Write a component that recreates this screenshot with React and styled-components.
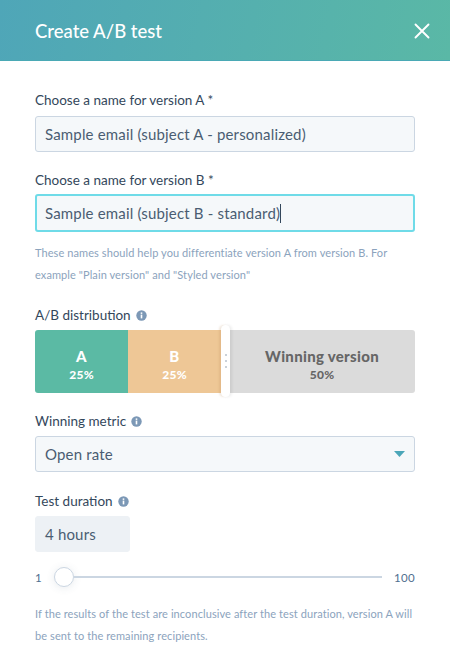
import React from "react";
import styled, { createGlobalStyle } from "styled-components";

const GlobalStyle = createGlobalStyle`
    html, body {
        margin: 0;
        padding: 0;
        background: #fff;
    }
    body {
        font-family: "Lato", "Liberation Sans", sans-serif;
        color: #33475b;
    }
    * {
        box-sizing: border-box;
    }
`;

const Modal = styled.div`
    width: 450px;
    height: 661px;
    overflow: hidden;
    background: #fff;
`;

const Header = styled.header`
    height: 61px;
    padding: 1px 20px 0 35px;
    display: flex;
    align-items: center;
    justify-content: space-between;
    background: linear-gradient(100deg, #4fa6b8 0%, #5ab8a6 100%);
    border-bottom: 1px solid #4aa9b5;
`;

const Title = styled.h1`
    margin: 0;
    font-size: 18.5px;
    font-weight: 500;
    letter-spacing: 0;
    color: #fff;
`;

const Close = styled.button`
    width: 16px;
    height: 16px;
    padding: 0;
    border: 0;
    background: none;
    display: flex;
`;

const Body = styled.div`
    padding: 29px 35px 0;
    display: flex;
    flex-direction: column;
`;

const Label = styled.label`
    height: 20px;
    margin-top: ${p => p.$top || 0}px;
    margin-bottom: ${p => p.$bottom || 6}px;
    display: flex;
    align-items: center;
    gap: 5px;
    font-size: 13.5px;
    line-height: 20px;
    color: #33475b;
`;

const Field = styled.div`
    width: ${p => p.$width || "100%"};
    height: ${p => p.$height || 36}px;
    padding: 0 ${p => (p.$focus ? 8 : 9)}px;
    display: flex;
    align-items: center;
    justify-content: space-between;
    font-size: 15px;
    letter-spacing: 0.17px;
    color: #4a5d72;
    background: #f5f8fa;
    border: ${p => (p.$focus ? "2px solid #6fdbe8" : "1px solid #cbd6e2")};
    border-radius: 3px;
`;

const Value = styled.span`
    display: flex;
    align-items: center;
`;

const Caret = styled.span`
    width: 1px;
    height: 19px;
    background: #33475b;
`;

const Duration = styled(Field)`
    background: #edf1f5;
    border-color: #edf1f5;
`;

const Help = styled.p`
    margin: ${p => p.$top || 0}px 0 0;
    font-size: 11px;
    line-height: 21.6px;
    letter-spacing: 0.09px;
    white-space: nowrap;
    color: #8ba3bd;
`;

const Bar = styled.div`
    position: relative;
    height: 63px;
    display: flex;
`;

const Segment = styled.div`
    width: ${p => p.$width}px;
    padding: 5px 0 0 ${p => p.$inset || 0}px;
    display: flex;
    flex-direction: column;
    align-items: center;
    justify-content: center;
    background: ${p => p.$bg};
    color: ${p => p.$color};
    border-radius: ${p => p.$radius || 0};
`;

const SegmentName = styled.div`
    font-size: 15px;
    line-height: 18px;
    font-weight: 900;
    letter-spacing: 0.3px;
`;

const SegmentShare = styled.div`
    margin-top: 2px;
    font-size: 12px;
    line-height: 15px;
    font-weight: 900;
    letter-spacing: 0.3px;
`;

const Handle = styled.div`
    position: absolute;
    left: 186px;
    top: -5px;
    width: 9px;
    height: 72px;
    display: flex;
    flex-direction: column;
    align-items: center;
    justify-content: center;
    gap: 4px;
    background: #fff;
    border-radius: 5px;
    box-shadow: -2px 0 2px rgba(180, 130, 80, 0.18), 2px 0 3px rgba(0, 0, 0, 0.07);
`;

const HandleDot = styled.span`
    width: 2px;
    height: 2px;
    border-radius: 50%;
    background: #b9c2cc;
`;

const SliderRow = styled.div`
    height: 26px;
    margin-top: 12px;
    display: flex;
    align-items: center;
    font-size: 11.5px;
    letter-spacing: 0.3px;
    color: #516f90;
`;

const SliderMin = styled.span`
    width: 19px;
`;

const Thumb = styled.span`
    width: 20px;
    height: 20px;
    flex-shrink: 0;
    background: #fff;
    border: 1px solid #cbd6e2;
    border-radius: 50%;
    box-shadow: 0 1px 8px rgba(66, 91, 118, 0.12);
`;

const Track = styled.span`
    flex: 1;
    height: 2px;
    background: #cbd6e2;
`;

const SliderMax = styled.span`
    width: 33px;
    text-align: right;
`;

const CloseIcon = () => (
    <svg width="16" height="16" viewBox="0 0 16 16" fill="none" stroke="#fff" strokeWidth="1.9" strokeLinecap="round">
        <path d="M1.5 1.5l13 13M14.5 1.5l-13 13" />
    </svg>
);

const InfoIcon = () => (
    <svg width="11" height="11" viewBox="0 0 11 11">
        <circle cx="5.5" cy="5.5" r="5.2" fill="#7c98b6" />
        <rect x="4.7" y="4.6" width="1.6" height="3.8" fill="#fff" />
        <rect x="4.7" y="2.4" width="1.6" height="1.5" fill="#fff" />
    </svg>
);

const ArrowIcon = () => (
    <svg width="11" height="6" viewBox="0 0 11 6">
        <path d="M0 0h11L5.5 6z" fill="#4ba6b8" />
    </svg>
);

const App = () => {
    return (
        <Modal>
            <GlobalStyle />
            <Header>
                <Title>Create A/B test</Title>
                <Close aria-label="Close"><CloseIcon /></Close>
            </Header>
            <Body>
                <Label>Choose a name for version A *</Label>
                <Field>Sample email (subject A - personalized)</Field>

                <Label $top={18} $bottom={4}>Choose a name for version B *</Label>
                <Field $focus $height={38}>
                    <Value>Sample email (subject B - standard)<Caret /></Value>
                </Field>
                <Help $top={10}>
                    These names should help you differentiate version A from version B. For<br />
                    example "Plain version" and "Styled version"
                </Help>

                <Label $top={20} $bottom={5}>A/B distribution <InfoIcon /></Label>
                <Bar>
                    <Segment $width={93} $bg="#5bbaa4" $color="#fff" $radius="3px 0 0 3px">
                        <SegmentName>A</SegmentName>
                        <SegmentShare>25%</SegmentShare>
                    </Segment>
                    <Segment $width={93} $bg="#eec796" $color="#fff">
                        <SegmentName>B</SegmentName>
                        <SegmentShare>25%</SegmentShare>
                    </Segment>
                    <Segment $width={194} $inset={8} $bg="#dbdbdb" $color="#666" $radius="0 3px 3px 0">
                        <SegmentName>Winning version</SegmentName>
                        <SegmentShare>50%</SegmentShare>
                    </Segment>
                    <Handle>
                        <HandleDot />
                        <HandleDot />
                        <HandleDot />
                    </Handle>
                </Bar>

                <Label $top={18} $bottom={5}>Winning metric <InfoIcon /></Label>
                <Field>
                    <span>Open rate</span>
                    <ArrowIcon />
                </Field>

                <Label $top={19} $bottom={5}>Test duration <InfoIcon /></Label>
                <Duration $width="95px">4 hours</Duration>

                <SliderRow>
                    <SliderMin>1</SliderMin>
                    <Thumb />
                    <Track />
                    <SliderMax>100</SliderMax>
                </SliderRow>

                <Help $top={13}>
                    If the results of the test are inconclusive after the test duration, version A will<br />
                    be sent to the remaining recipients.
                </Help>
            </Body>
        </Modal>
    );
};

export default App;
